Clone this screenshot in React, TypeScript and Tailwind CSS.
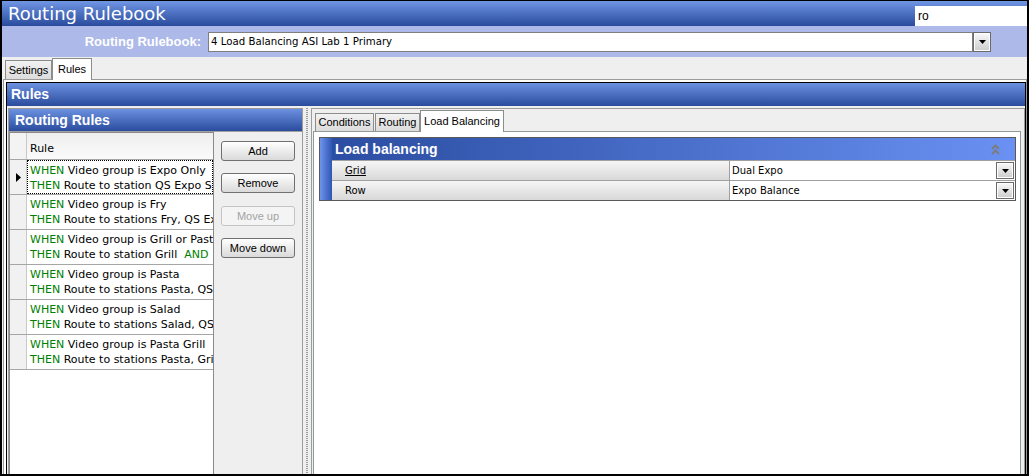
import React from 'react';

const verdana = "font-['DejaVu_Sans',Verdana,sans-serif]";
const tahoma = "font-['Liberation_Sans',Arial,sans-serif]";

interface Rule {
  when: string;
  then: string;
  and?: boolean;
}

const rules: Rule[] = [
  { when: 'Video group is Expo Only', then: 'Route to station QS Expo Station' },
  { when: 'Video group is Fry', then: 'Route to stations Fry, QS Expo' },
  { when: 'Video group is Grill or Pasta', then: 'Route to station Grill', and: true },
  { when: 'Video group is Pasta', then: 'Route to stations Pasta, QS Expo' },
  { when: 'Video group is Salad', then: 'Route to stations Salad, QS Expo' },
  { when: 'Video group is Pasta Grill', then: 'Route to stations Pasta, Grill' },
];

const DownTriangle = () => (
  <svg width="7" height="4" viewBox="0 0 7 4">
    <path d="M0 0h7L3.5 4z" fill="#000" />
  </svg>
);

const DropButton: React.FC<{ className?: string }> = ({ className = '' }) => (
  <div className={`border border-[#6a6a6a] ${className}`}>
    <div className="w-full h-full border border-white bg-linear-to-b from-[#f7f7f7] to-[#cfcfcf] flex items-center justify-center">
      <DownTriangle />
    </div>
  </div>
);

const Button: React.FC<{ label: string; disabled?: boolean }> = ({ label, disabled }) => (
  <div
    className={`w-[74px] h-[20px] rounded-[3px] border flex items-center justify-center text-[11px] ${tahoma} ${
      disabled
        ? 'border-[#c4c4c4] bg-[#f4f4f4] text-[#a3a3a3]'
        : 'border-[#707070] bg-linear-to-b from-[#ffffff] to-[#dadada] text-black'
    }`}
  >
    {label}
  </div>
);

const BlueHeader: React.FC<{ title: string; className?: string }> = ({ title, className = '' }) => (
  <div
    className={`shrink-0 flex items-center bg-linear-to-b from-[#6d91e1] to-[#2b4c9c] text-white font-bold text-[14px] ${tahoma} ${className}`}
  >
    {title}
  </div>
);

export default function App() {
  return (
    <div className={`w-[1029px] h-[476px] overflow-hidden bg-[#efefef] border-x-2 border-t border-b-2 border-black flex flex-col ${tahoma} text-black`}>
      {/* title bar */}
      <div className="h-[25px] shrink-0 flex items-end justify-between bg-linear-to-b from-[#7196e4] to-[#2a4b9d]">
        <div className={`self-center pl-[6px] pt-[1px] text-[18px] leading-none text-white ${verdana}`}>Routing Rulebook</div>
        <div className="w-[112px] h-[20px] bg-white pl-[3px] text-[12px] leading-[20px]">ro</div>
      </div>

      {/* rulebook selector */}
      <div className="h-[31px] shrink-0 bg-[#adb9e8] flex items-center">
        <div className="w-[199px] text-right text-white font-bold text-[13px]">Routing Rulebook:</div>
        <div className="ml-[7px] w-[783px] h-[20px] flex">
          <div className={`flex-1 bg-white border border-[#7f7f7f] pl-[2px] text-[10.2px] leading-[18px] ${verdana}`}>
            4 Load Balancing ASI Lab 1 Primary
          </div>
          <DropButton className="w-[18px] h-[20px]" />
        </div>
      </div>

      {/* top tabs */}
      <div className="h-[22px] shrink-0 flex items-end pl-[3px] text-[11px]">
        <div className="w-[47px] h-[19px] bg-linear-to-b from-[#f2f2f2] to-[#dcdcdc] border border-b-0 border-[#8c8c8c] flex items-center justify-center">
          Settings
        </div>
        <div className="relative z-10 -mb-[1px] w-[40px] h-[22px] bg-white border border-b-0 border-[#8c8c8c] flex justify-center pt-[2px]">
          Rules
        </div>
      </div>

      {/* tab page */}
      <div className="flex-1 min-h-0 ml-[1px] border-l border-t border-r border-[#9a9a9a] bg-white pl-[2px] pt-[2px] flex flex-col">
        <div className="flex-1 min-h-0 border-x border-t border-black flex flex-col">
          <BlueHeader title="Rules" className="h-[23px] pl-[4px]" />

          <div className="flex-1 min-h-0 bg-[#efefef] pl-[1px] pt-[2px] flex">
            {/* left: routing rules */}
            <div className="w-[295px] shrink-0 border border-b-0 border-[#9c9c9c] flex flex-col">
              <BlueHeader title="Routing Rules" className="h-[23px] pl-[6px] border-b border-[#a0a0a0]" />
              <div className="flex-1 min-h-0 flex">
                <div className={`w-[205px] shrink-0 bg-white border-x border-t border-[#8a8a8a] flex flex-col text-[11px] ${verdana}`}>
                  <div className="h-[27px] shrink-0 flex border-b border-[#a6a6a6] bg-[#f3f3f3]">
                    <div className="w-[17px] border-r border-[#c8c8c8]" />
                    <div className="flex-1 flex items-end pl-[3px] pb-[2px] bg-linear-to-b from-[#eeeeee] to-[#fbfbfb]">Rule</div>
                  </div>
                  {rules.map((r, i) => (
                    <div key={i} className="h-[35px] shrink-0 flex border-b border-[#a6a6a6]">
                      <div className="w-[17px] shrink-0 bg-[#f1f1f1] border-r border-[#c8c8c8] flex items-center justify-center">
                        {i === 0 && (
                          <svg width="5" height="9" viewBox="0 0 5 9">
                            <path d="M0 0 5 4.5 0 9z" fill="#000" />
                          </svg>
                        )}
                      </div>
                      <div
                        className={`flex-1 min-w-0 overflow-hidden whitespace-nowrap leading-[15px] pt-[2px] ${
                          i === 0 ? 'border border-dotted border-black pl-[2px] pt-[1px]' : 'pl-[3px]'
                        }`}
                      >
                        <div>
                          <span className="text-[#008000]">WHEN</span> {r.when}
                        </div>
                        <div>
                          <span className="text-[#008000]">THEN</span> {r.then}
                          {r.and && <span className="text-[#008000]">{'\u00a0\u00a0'}AND</span>}
                        </div>
                      </div>
                    </div>
                  ))}
                </div>
                <div className="flex-1 flex flex-col pl-[7px] pt-[9px] gap-[12px]">
                  <Button label="Add" />
                  <Button label="Remove" />
                  <div className="mt-[1px]">
                    <Button label="Move up" disabled />
                  </div>
                  <Button label="Move down" />
                </div>
              </div>
            </div>

            {/* splitter */}
            <div className="w-[8px] shrink-0 flex justify-center">
              <div className="w-[2px] h-full bg-[repeating-linear-gradient(to_bottom,#9a9a9a_0_1px,#efefef_1px_2px)]" />
            </div>

            {/* right: rule details */}
            <div className="flex-1 min-w-0 border-l border-t border-r border-[#9c9c9c] flex flex-col">
              <div className="h-[22px] shrink-0 flex items-end pl-[3px] text-[11px]">
                <div className="w-[59px] h-[18px] bg-linear-to-b from-[#f2f2f2] to-[#dcdcdc] border border-b-0 border-[#8c8c8c] flex items-center justify-center">
                  Conditions
                </div>
                <div className="ml-[1px] w-[45px] h-[18px] bg-linear-to-b from-[#f2f2f2] to-[#dcdcdc] border border-b-0 border-[#8c8c8c] flex items-center justify-center">
                  Routing
                </div>
                <div className="relative z-10 -mb-[1px] w-[84px] h-[22px] bg-white border border-b-0 border-[#8c8c8c] flex justify-center pt-[2px]">
                  Load Balancing
                </div>
              </div>
              <div className="flex-1 min-h-0 ml-[1px] mr-[3px] border border-b-0 border-[#919b9c] bg-white pl-[5px] pt-[5px] pr-[4px]">
                <div className="border border-[#5a5a5a] flex">
                  <div className="w-[12px] shrink-0 bg-linear-to-r from-[#6f94ec] to-[#2f56b4]" />
                  <div className="flex-1 flex flex-col">
                    <div className="h-[22px] flex items-center justify-between bg-linear-to-r from-[#2b4da2] to-[#6a91f3] pl-[3px] pr-[15px]">
                      <span className="text-white font-bold text-[14px]">Load balancing</span>
                      <svg width="9" height="11" viewBox="0 0 9 11">
                        <path d="M1 5 4.5 1.5 8 5M1 10 4.5 6.5 8 10" stroke="#7c7c7c" strokeWidth="2" fill="none" />
                      </svg>
                    </div>
                    {[
                      { label: 'Grid', value: 'Dual Expo', underline: true },
                      { label: 'Row', value: 'Expo Balance', underline: false },
                    ].map((row) => (
                      <div key={row.label} className={`h-[20px] flex border-t border-[#a0a0a0] text-[10px] ${verdana}`}>
                        <div className="w-[398px] shrink-0 bg-linear-to-b from-[#f6f6f6] to-[#d8d8d8] border-r border-[#a0a0a0] pl-[13px] flex items-center">
                          <span className={row.underline ? 'underline' : ''}>{row.label}</span>
                        </div>
                        <div className="flex-1 bg-white flex items-center justify-between pl-[2px] pr-[1px]">
                          <span>{row.value}</span>
                          <DropButton className="w-[18px] h-[17px]" />
                        </div>
                      </div>
                    ))}
                  </div>
                </div>
              </div>
            </div>
          </div>
        </div>
      </div>
    </div>
  );
}
